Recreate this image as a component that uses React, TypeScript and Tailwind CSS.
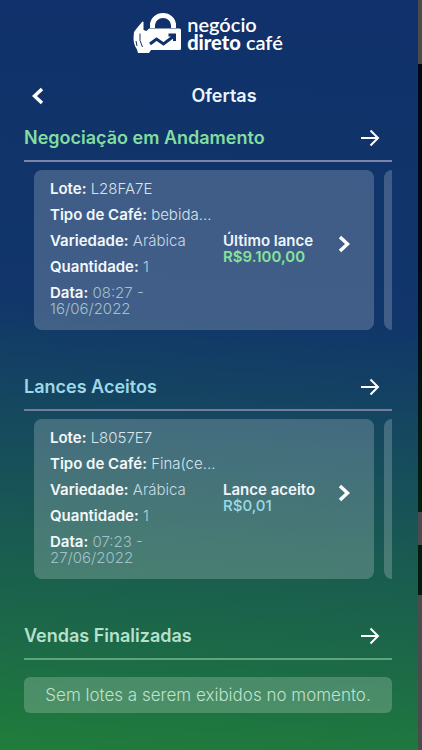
import type { ReactNode } from 'react';

type Offer = {
  lote: string;
  tipo: string;
  variedade: string;
  quantidade: string;
  hora: string;
  dia: string;
  status: string;
  valor: string;
  valorClass: string;
};

const emAndamento: Offer = {
  lote: 'L28FA7E',
  tipo: 'bebida...',
  variedade: 'Arábica',
  quantidade: '1',
  hora: '08:27 -',
  dia: '16/06/2022',
  status: 'Último lance',
  valor: 'R$9.100,00',
  valorClass: 'font-semibold text-[#86e29b]',
};

const aceito: Offer = {
  lote: 'L8057E7',
  tipo: 'Fina(ce...',
  variedade: 'Arábica',
  quantidade: '1',
  hora: '07:23 -',
  dia: '27/06/2022',
  status: 'Lance aceito',
  valor: 'R$0,01',
  valorClass: 'font-medium text-[#9bdbe6]',
};

function Logo() {
  return (
    <div className="flex items-center justify-center gap-1.5 text-white">
      <svg viewBox="0 0 48 42" className="h-[42px] w-12" aria-hidden="true">
        <path d="M19.500 16v-3a10.500 9.500 0 0 1 21 0v3" fill="none" stroke="currentColor" strokeWidth="5" />
        <path
          d="M16 16.500h30.500a1.500 1.500 0 0 1 1.500 1.500V36.500a1.500 1.500 0 0 1-1.500 1.500H18L16 41H5l-1-3.500C1.500 34 .5 30 .5 26L1 20l3-4L9.500 9.500l1 .5V18l3 1z"
          fill="currentColor"
        />
        <path d="M7 21.500v7l2.500 6.500M3 29l1 5" fill="none" stroke="#10316a" strokeWidth="1" />
        <path d="M17 32l6.500-5 7 5L41 24M35.500 23h6v6" fill="none" stroke="#10316a" strokeWidth="3" />
      </svg>
      <div className="font-[Lato,sans-serif] text-[20px] leading-[18px]">
        <p className="font-semibold">negócio</p>
        <p>
          <strong className="font-black">direto</strong> <span className="font-semibold">café</span>
        </p>
      </div>
    </div>
  );
}

function Chevron({ className }: { className: string }) {
  return (
    <svg viewBox="0 0 12 18" className={className} fill="none" stroke="currentColor" strokeWidth="3.500" aria-hidden="true">
      <path d="M2 2l7.500 7L2 16" />
    </svg>
  );
}

function Field({ label, value, className }: { label: string; value: string; className: string }) {
  return (
    <div className="whitespace-nowrap">
      <dt className="inline font-semibold text-[#f3f8fc]">{label}:</dt>{' '}
      <dd className={`inline font-light ${className}`}>{value}</dd>
    </div>
  );
}

function OfferCard({ offer }: { offer: Offer }) {
  return (
    <article className="flex w-[340px] shrink-0 items-center rounded-lg bg-white/20 pt-[11px] pr-6 pb-[13px] pl-4 text-[15px] leading-4">
      <dl className="flex w-[173px] flex-col gap-2.5">
        <Field label="Lote" value={offer.lote} className="text-[#d8e5ee]" />
        <Field label="Tipo de Café" value={offer.tipo} className="text-[#d8e5ee]" />
        <Field label="Variedade" value={offer.variedade} className="text-[#cbdbe5]" />
        <Field label="Quantidade" value={offer.quantidade} className="text-[#b9cfdb]" />
        <div>
          <Field label="Data" value={offer.hora} className="text-[#a3c0cc]" />
          <dd className="font-light text-[#a3c0cc]">{offer.dia}</dd>
        </div>
      </dl>
      <div className="flex-1">
        <p className="font-semibold text-[#eef5fa]">{offer.status}</p>
        <p className={offer.valorClass}>{offer.valor}</p>
      </div>
      <button type="button" aria-label="Ver lote" className="mb-2.5 text-white">
        <Chevron className="h-[18px] w-3" />
      </button>
    </article>
  );
}

type SectionProps = {
  title: string;
  titleClass: string;
  lineClass: string;
  children: ReactNode;
};

function Section({ title, titleClass, lineClass, children }: SectionProps) {
  return (
    <section>
      <div className={`flex h-[38px] items-center justify-between border-b-2 pr-3 pb-2 ${lineClass}`}>
        <h2 className={`text-[18px] leading-6 font-semibold ${titleClass}`}>{title}</h2>
        <button type="button" aria-label={`Ver ${title}`} className="text-white">
          <svg viewBox="0 0 20 18" className="h-[18px] w-5" fill="none" stroke="currentColor" strokeWidth="2" aria-hidden="true">
            <path d="M1 9h17M10.500 1.500L18 9l-7.500 7.500" />
          </svg>
        </button>
      </div>
      {children}
    </section>
  );
}

function Carousel({ offer }: { offer: Offer }) {
  return (
    <div className="flex gap-2.5 overflow-hidden pt-2 pl-2.5">
      <OfferCard offer={offer} />
      {/* Edge of the next card */}
      <div className="w-[340px] shrink-0 rounded-lg bg-white/20" />
    </div>
  );
}

export default function App() {
  return (
    <div className="flex min-h-screen font-[Inter,sans-serif]">
      <main className="min-w-0 flex-1 bg-[linear-gradient(184deg,#10316b_0%,#11366a_42%,#15485f_56%,#195952_71%,#1c6a47_86%,#207d3b_100%)] pt-3 pr-[26px] pb-9 pl-6">
        <Logo />

        <header className="mt-[30px] grid grid-cols-[32px_1fr_0px] items-center">
          <button type="button" aria-label="Voltar" className="pl-2 text-white">
            <Chevron className="h-[18px] w-3 rotate-180" />
          </button>
          <h1 className="text-center text-[18px] leading-6 font-semibold text-[#edf3fa]">Ofertas</h1>
        </header>

        <div className="mt-4 flex flex-col gap-[43px]">
          <Section title="Negociação em Andamento" titleClass="text-[#82dda0]" lineClass="border-[#7c86ab]">
            <Carousel offer={emAndamento} />
          </Section>
          <Section title="Lances Aceitos" titleClass="text-[#9ed8e8]" lineClass="border-[#747d9e]">
            <Carousel offer={aceito} />
          </Section>
          <Section title="Vendas Finalizadas" titleClass="text-[#b7e0cd]" lineClass="border-[#5fa57b]">
            <p className="mt-[17px] rounded-md bg-white/20 py-2 text-center text-[17px] leading-5 font-light text-[#bfe2cd]">
              Sem lotes a serem exibidos no momento.
            </p>
          </Section>
        </div>
      </main>

      {/* Dimmed page behind the panel */}
      <aside className="flex w-1 shrink-0 flex-col bg-[#4b4a4c]">
        <div className="mt-16 h-[196px] bg-[#020818]" />
        <div className="h-[252px] bg-[linear-gradient(#020818,#03200f)]" />
        <div className="mt-[33px] h-[50px] bg-[#031c0d]" />
      </aside>
    </div>
  );
}
